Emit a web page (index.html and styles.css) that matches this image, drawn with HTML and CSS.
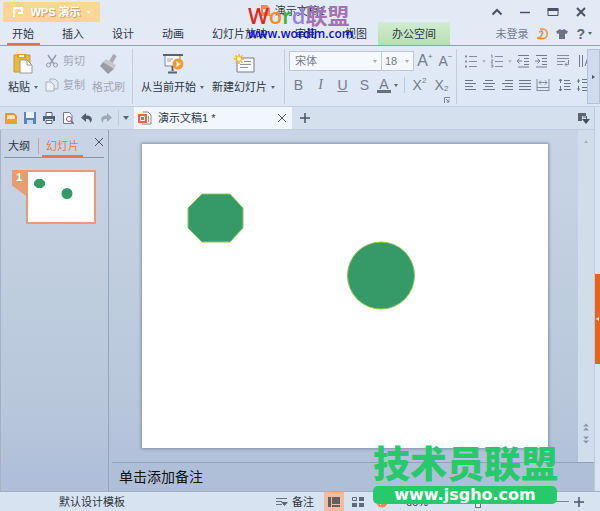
FILE: index.html
```html
<!DOCTYPE html>
<html lang="zh-CN">
<head>
    <meta charset="UTF-8">
    <meta name="viewport" content="width=device-width, initial-scale=1.0">
    <title>演示文稿1 - WPS 演示</title>
    <link rel="stylesheet" href="styles.css">
</head>
<body>
    <div class="app">
        <header class="title-bar">
            <button class="app-button">
                <svg width="12" height="12" viewBox="0 0 12 12"><path d="M2 11V2h8v5H6" fill="none" stroke="#fff" stroke-width="2"/></svg>
                <span>WPS 演示</span>
                <i class="arrow arrow-white"></i>
            </button>
            <div class="doc-title">
                <svg width="12" height="12" viewBox="0 0 12 12"><path d="M2 0h6l3 3v8H2z" fill="#f08a5c"/><path d="M4 4h4v3H4z" fill="#fff"/></svg>
                <span>演示文稿1 *</span>
            </div>
            <div class="window-buttons">
                <button aria-label="收起"><svg width="12" height="12" viewBox="0 0 12 12"><path d="M1.500 8.500L6 4l4.500 4.500" fill="none" stroke="#4a5364" stroke-width="2"/></svg></button>
                <button aria-label="最小化"><svg width="12" height="12" viewBox="0 0 12 12"><path d="M1 6.500h10" stroke="#4a5364" stroke-width="1.500"/></svg></button>
                <button aria-label="最大化"><svg width="12" height="12" viewBox="0 0 12 12"><path d="M1 3.500h10v6H1z" fill="none" stroke="#4a5364"/><path d="M.5 2h11v3H.5z" fill="#4a5364"/></svg></button>
                <button aria-label="关闭"><svg width="12" height="12" viewBox="0 0 12 12"><path d="M2 2l8 8M10 2l-8 8" stroke="#4a5364" stroke-width="2"/></svg></button>
            </div>
        </header>

        <nav class="menu">
            <button class="menu-tab active">开始</button>
            <button class="menu-tab">插入</button>
            <button class="menu-tab">设计</button>
            <button class="menu-tab">动画</button>
            <button class="menu-tab">幻灯片放映</button>
            <button class="menu-tab">审阅</button>
            <button class="menu-tab">视图</button>
            <button class="menu-tab office">办公空间</button>
            <div class="account">
                <a href="#">未登录</a>
                <button aria-label="云服务"><svg width="12" height="12" viewBox="0 0 12 12"><path d="M4 1h2.500a4.500 4.500 0 0 1 0 9.500H2M1 10c3 0 5-2 5-5M3 4l3-1 1 3" fill="none" stroke="#e8913a" stroke-width="1.500"/></svg></button>
                <button aria-label="皮肤"><svg width="12" height="12" viewBox="0 0 12 12"><path d="M4 1q2 2 4 0l4 2.500-1.500 2.500L9 5.500V11H3V5.500L1.500 6 0 3.500z" fill="#6b7484"/></svg></button>
                <button class="help" aria-label="帮助">?<i class="arrow"></i></button>
            </div>
        </nav>

        <div class="ribbon">
            <div class="group clipboard">
                <button class="big-tool">
                    <svg width="22" height="22" viewBox="0 0 22 22"><path d="M2 2h16v17H2z" fill="#e9b93c" stroke="#c99c29"/><path d="M5 1h9v4H5z" fill="#d5a12a"/><path d="M7 2h5v2H7z" fill="#fff"/><path d="M8 7h7l5 5v8H8z" fill="#fff" stroke="#9a9a94"/><path d="M15 7v5h5" fill="none" stroke="#9a9a94"/></svg>
                    <span>粘贴<i class="arrow"></i></span>
                </button>
                <div class="tool-stack">
                    <button class="tool" disabled>
                        <svg width="14" height="14" viewBox="0 0 14 14"><path d="M3 1l6 9M11 1L5 10" fill="none" stroke="#959cab" stroke-width="1.500"/><circle cx="3.500" cy="11" r="2" fill="none" stroke="#959cab"/><circle cx="10.500" cy="11" r="2" fill="none" stroke="#959cab"/></svg>
                        剪切
                    </button>
                    <button class="tool" disabled>
                        <svg width="14" height="14" viewBox="0 0 14 14"><path d="M5 3V1h5l3 3v7H9" fill="none" stroke="#a9afbd"/><path d="M1 4h5l3 3v6H1z" fill="#edf1f8" stroke="#a9afbd"/></svg>
                        复制
                    </button>
                </div>
                <button class="big-tool" disabled>
                    <svg width="22" height="22" viewBox="0 0 22 22"><path d="M13 9l4-7" stroke="#a5aab5" stroke-width="4"/><path d="M8 6l10 6-2 4L5 9z" fill="#c3c7d0"/><path d="M5 9l11 7-6 5-8-8z" fill="#989da7"/></svg>
                    <span>格式刷</span>
                </button>
            </div>

            <div class="group slides">
                <button class="big-tool">
                    <svg width="22" height="22" viewBox="0 0 22 22"><path d="M1 2h20" stroke="#596273" stroke-width="2"/><path d="M3 3v10h15V3" fill="#f3f6fa" stroke="#7d8797"/><path d="M5 6h6M5 8h4" stroke="#9aa4b2"/><path d="M10.500 13v5M6 19.500h9" stroke="#596273" stroke-width="2"/><circle cx="16" cy="11" r="5.500" fill="#f39a2d"/><path d="M14.500 8v6l4-3z" fill="#fff"/></svg>
                    <span>从当前开始<i class="arrow"></i></span>
                </button>
                <button class="big-tool">
                    <svg width="22" height="22" viewBox="0 0 22 22"><path d="M4 5h17v14H4z" fill="#f7f9fc" stroke="#737c8b"/><path d="M11 8.500h7M7 11.500h11M7 14.500h8" stroke="#8c94a2"/><path d="M6 1v10M1 6h10M2.500 2.500l7 7M9.500 2.500l-7 7" stroke="#f2b52e" stroke-width="1.500"/><circle cx="6" cy="6" r="2" fill="#fff3c2"/></svg>
                    <span>新建幻灯片<i class="arrow"></i></span>
                </button>
            </div>

            <div class="group font">
                <div class="row">
                    <div class="combo combo-font">
                        <select aria-label="字体"><option>宋体</option></select><i class="arrow"></i>
                    </div>
                    <div class="combo combo-size">
                        <select aria-label="字号"><option>18</option></select><i class="arrow"></i>
                    </div>
                    <button class="glyph large" aria-label="增大字号">A<sup>+</sup></button>
                    <button class="glyph" aria-label="减小字号">A<sup>−</sup></button>
                </div>
                <div class="row letters">
                    <button class="glyph bold">B</button>
                    <button class="glyph italic">I</button>
                    <button class="glyph underline">U</button>
                    <button class="glyph shadow">S</button>
                    <button class="glyph color">A</button>
                    <i class="arrow"></i>
                    <i class="sep"></i>
                    <button class="glyph">X<sup>2</sup></button>
                    <button class="glyph">X<sub>2</sub></button>
                </div>
                <button class="launcher" aria-label="字体设置"><svg width="6" height="6" viewBox="0 0 6 6"><path d="M.5 6V.5H6M2 2l3 3M5 2.500V5H2.500" fill="none" stroke="#7b8494"/></svg></button>
            </div>

            <div class="group paragraph">
                <div class="row">
                    <button aria-label="项目符号"><svg width="14" height="14" viewBox="0 0 14 14"><path d="M5 2.500h8M5 7.500h8M5 12.500h8" stroke="#858d9b"/><path d="M1 2.500h2M1 7.500h2M1 12.500h2" stroke="#858d9b" stroke-width="2"/></svg></button>
                    <i class="arrow pale"></i>
                    <button aria-label="编号"><svg width="14" height="14" viewBox="0 0 14 14"><path d="M5 2.500h8M5 7.500h8M5 12.500h8" stroke="#858d9b"/><path d="M1 1h1v3M1 6h2L1 9h2M1 11h2v2H1" fill="none" stroke="#858d9b"/></svg></button>
                    <i class="arrow pale"></i>
                    <button aria-label="减少缩进"><svg width="14" height="14" viewBox="0 0 14 14"><path d="M2 1.500h11M8 4.500h5M8 7.500h5M8 10.500h5M2 13h11M1 7h5M3.500 4.500L1 7l2.500 2.500" fill="none" stroke="#737c8c"/></svg></button>
                    <button aria-label="增加缩进"><svg width="14" height="14" viewBox="0 0 14 14"><path d="M2 1.500h11M8 4.500h5M8 7.500h5M8 10.500h5M2 13h11M1 7h5M3.500 4.500L6 7 3.500 9.500" fill="none" stroke="#737c8c"/></svg></button>
                    <i class="sep"></i>
                    <button aria-label="换行"><svg width="14" height="14" viewBox="0 0 14 14"><path d="M1 1.500h12M1 4.500h12M1 7.500h8M1 10.500h6M12.500 6v4.500H9M11 8.500l-2 2 2 2" fill="none" stroke="#858d9b"/></svg></button>
                    <i class="sep"></i>
                    <button aria-label="文字方向"><svg width="14" height="14" viewBox="0 0 14 14"><path d="M1.500 1v12M4.500 1v12M7 12l3-9 3 9M8 9h4" fill="none" stroke="#737c8c"/></svg></button>
                </div>
                <div class="row">
                    <button aria-label="左对齐"><svg width="14" height="14" viewBox="0 0 14 14"><path d="M1 2.500h8M1 5.500h11M1 8.500h8M1 11.500h11" stroke="#6c7585"/></svg></button>
                    <button aria-label="居中"><svg width="14" height="14" viewBox="0 0 14 14"><path d="M3 2.500h8M1 5.500h12M3 8.500h8M1 11.500h12" stroke="#6c7585"/></svg></button>
                    <button aria-label="右对齐"><svg width="14" height="14" viewBox="0 0 14 14"><path d="M5 2.500h8M2 5.500h11M5 8.500h8M2 11.500h11" stroke="#6c7585"/></svg></button>
                    <button aria-label="两端对齐"><svg width="14" height="14" viewBox="0 0 14 14"><path d="M1 2.500h12M1 5.500h12M1 8.500h12M1 11.500h12" stroke="#6c7585"/></svg></button>
                    <button aria-label="分散对齐"><svg width="14" height="14" viewBox="0 0 14 14"><path d="M1 1v12M13 1v12M3 4.500h8M5 2.500l-2 2 2 2M9 2.500l2 2-2 2M1 9.500h12M1 12.500h12" fill="none" stroke="#858d9b"/></svg></button>
                    <i class="sep"></i>
                    <button aria-label="行距"><svg width="14" height="14" viewBox="0 0 14 14"><path d="M6 2.500h6M6 5.500h7M6 8.500h6M6 11.500h7M2.500 1v4M1 3l1.500-2L4 3M2.500 8v5M1 11l1.500 2L4 11" fill="none" stroke="#6c7585"/></svg></button>
                    <button aria-label="段距"><svg width="14" height="14" viewBox="0 0 14 14"><path d="M6 1.500h7M6 4.500h7M6 9.500h7M6 12.500h7M2.500 1v4M1 3h3M2.500 8v5M1 11h3" fill="none" stroke="#6c7585"/></svg></button>
                </div>
            </div>
            <button class="ribbon-more" aria-label="更多"><i class="arrow-right"></i></button>
        </div>

        <div class="body">
            <div class="main">
                <div class="tab-bar">
                    <div class="quick">
                        <button aria-label="打开"><svg width="12" height="12" viewBox="0 0 12 12"><path d="M0 1h9l3 3v8H0z" fill="#e8932c"/><path d="M2 3h7l1 2v3H2z" fill="#fbe3ba"/><path d="M0 7h12v5H0z" fill="#f0a030"/></svg></button>
                        <button aria-label="保存"><svg width="12" height="12" viewBox="0 0 12 12"><path d="M0 0h12v12H0z" fill="#5d82b9"/><path d="M2 0h8v6H2z" fill="#e9f1fb"/><path d="M3 8h6v4H3z" fill="#c6d6ec"/></svg></button>
                        <button aria-label="打印"><svg width="12" height="12" viewBox="0 0 12 12"><path d="M3 4V.5h6V4M3 8.500h6v3H3z" fill="#fff" stroke="#52627c"/><path d="M0 4h12v5h-2V7H2v2H0z" fill="#52627c"/></svg></button>
                        <button aria-label="打印预览"><svg width="12" height="12" viewBox="0 0 12 12"><path d="M1.500.5h6l2.500 3v8h-8.500z" fill="#fff" stroke="#73798d"/><circle cx="7" cy="7" r="2.500" fill="#fff" stroke="#7c5c88"/><path d="M9 9l3 3" stroke="#7c5c88" stroke-width="1.500"/></svg></button>
                        <button aria-label="撤销"><svg width="12" height="12" viewBox="0 0 12 12"><path d="M5 1L0 5.500 5 10V7c3-.5 4 1 4 4 4-4 1-8-4-7.500z" fill="#525d70"/></svg></button>
                        <button aria-label="恢复"><svg width="12" height="12" viewBox="0 0 12 12"><path d="M7 1l5 4.500L7 10V7c-3-.5-4 1-4 4C-1 7 2 3 7 3.500z" fill="#a1a9b6"/></svg></button>
                        <i class="sep"></i>
                        <i class="arrow arrow-wide"></i>
                    </div>
                    <div class="doc-tab">
                        <svg width="14" height="14" viewBox="0 0 14 14"><path d="M5 1h5l3 3v9H4" fill="#fff" stroke="#9d7c6d"/><path d="M0 3h9v9H0z" fill="#dc6c3c"/><path d="M2.500 5.500h4v4h-4z" fill="none" stroke="#fff"/><path d="M10.500 5v6" stroke="#b98c78"/></svg>
                        <span>演示文稿1 *</span>
                        <button aria-label="关闭标签"><svg width="8" height="8" viewBox="0 0 8 8"><path d="M0 0l8 8M8 0L0 8" stroke="#4a5364"/></svg></button>
                    </div>
                    <button class="new-tab" aria-label="新建标签"><svg width="12" height="12" viewBox="0 0 12 12"><path d="M6 1v10M1 6h10" stroke="#4a5364" stroke-width="1.500"/></svg></button>
                    <button class="tab-list" aria-label="标签列表"><svg width="12" height="12" viewBox="0 0 12 12"><path d="M0 1h8v3H4v5H0z" fill="#5b6473"/><path d="M5 5h4M8.500 4v4" stroke="#5b6473"/><path d="M4 7h8l-4 5z" fill="#444d5d"/></svg></button>
                </div>

                <div class="work">
                    <aside class="outline">
                        <div class="outline-tabs">
                            <button class="outline-tab">大纲</button>
                            <i class="sep"></i>
                            <button class="outline-tab active">幻灯片</button>
                            <button class="close" aria-label="关闭面板"><svg width="8" height="8" viewBox="0 0 8 8"><path d="M0 0l8 8M8 0L0 8" stroke="#4a5364"/></svg></button>
                        </div>
                        <div class="thumb-row">
                            <span class="thumb-no">1</span>
                            <svg class="thumb" viewBox="0 0 66 50"><path d="M9 7h5l3 3v3l-3 3H9l-3-3v-3z" fill="#359a68"/><circle cx="39" cy="21.500" r="5.500" fill="#359a68"/></svg>
                        </div>
                    </aside>
                    <section class="editor">
                        <div class="stage">
                            <div class="slide">
                                <svg viewBox="0 0 406 304">
                                    <g fill="#359a68" stroke="#8cc858">
                                        <path d="M60 50h28l13 14v20l-13 14H60L46 84V64z"/>
                                        <circle cx="239" cy="131.500" r="33.500"/>
                                    </g>
                                </svg>
                            </div>
                            <div class="scrollbar">
                                <button aria-label="向上"><i class="arrow-up"></i></button>
                                <button class="page-prev" aria-label="上一页"><svg width="6" height="8" viewBox="0 0 6 8"><path d="M0 3.500L3 .5l3 3zM0 7.500l3-3 3 3z" fill="#8b95a6"/></svg></button>
                                <button class="page-next" aria-label="下一页"><svg width="6" height="8" viewBox="0 0 6 8"><path d="M0 .5h6l-3 3zM0 4.500h6l-3 3z" fill="#8b95a6"/></svg></button>
                            </div>
                        </div>
                        <div class="notes">单击添加备注</div>
                    </section>
                </div>
            </div>
            <aside class="side-strip">
                <button aria-label="展开任务窗格"><i class="arrow-left"></i></button>
            </aside>
        </div>

        <footer class="status">
            <span class="template">默认设计模板</span>
            <button class="notes-toggle">
                <svg width="13" height="12" viewBox="0 0 13 12"><path d="M1 2.500h11M1 5.500h6M1 8.500h6" stroke="#68727f"/><path d="M6 6h7l-3.500 4z" fill="#5b6473"/></svg>
                备注
            </button>
            <button class="view active" aria-label="普通视图"><svg width="12" height="12" viewBox="0 0 12 12"><path d="M0 1h3v10H0zM4 1h8v7H4zM4 9h8v2H4z" fill="#655e62"/></svg></button>
            <button class="view" aria-label="幻灯片浏览"><svg width="12" height="12" viewBox="0 0 12 12"><path d="M.5 1.500h4v3h-4z" fill="none" stroke="#5f6877"/><path d="M7 1h5v4H7zM0 7h5v4H0zM7 7h5v4H7z" fill="#5f6877"/></svg></button>
            <button class="view" aria-label="放映"><svg width="12" height="12" viewBox="0 0 12 12"><circle cx="6" cy="6" r="5.500" fill="#ef8a51"/><path d="M4 3l5 3-5 3z" fill="#fff"/></svg></button>
            <span class="zoom-value">66%</span>
            <input class="zoom" type="range" min="0" max="100" value="19" aria-label="显示比例">
            <button class="zoom-in" aria-label="放大"><svg width="10" height="10" viewBox="0 0 10 10"><path d="M5 0v10M0 5h10" stroke="#4a5364" stroke-width="1.500"/></svg></button>
        </footer>

        <div class="mark-top">
            <div class="mark-name"><span class="c-red">W</span><span class="c-orange">o</span><span class="c-green">r</span><span class="c-violet">d</span><span class="c-plum">联盟</span></div>
            <div class="mark-url">www.wordlm.com</div>
        </div>
        <div class="mark-bottom">
            <div class="mark-title">技术员联盟</div>
            <div class="mark-pill">www.jsgho.com</div>
        </div>
    </div>
</body>
</html>
```
FILE: styles.css
```css
* {
    box-sizing: border-box;
}
body {
    margin: 0;
    font-family: "Liberation Sans", "Noto Sans CJK SC", sans-serif;
    font-size: 11px;
    line-height: 16px;
    color: #2c3442;
}
button {
    display: flex;
    align-items: center;
    justify-content: center;
    padding: 0;
    border: 0;
    background: none;
    font: inherit;
    color: inherit;
    white-space: nowrap;
}
svg {
    display: block;
    flex-shrink: 0;
}
.app {
    position: relative;
    display: flex;
    flex-direction: column;
    height: 100vh;
    overflow: hidden;
    background: #e2eaf6;
}

/* 小三角 */
.arrow,
.arrow-up,
.arrow-left,
.arrow-right {
    display: inline-block;
    flex-shrink: 0;
    border: 2px solid transparent;
}
.arrow {
    border-top: 3px solid #5b6473;
    border-bottom: 0;
}
.arrow-wide {
    border-width: 4px 3px 0;
}
.arrow-up {
    border-bottom: 3px solid #a5afbf;
    border-top: 0;
}
.arrow-left {
    border-right: 3px solid #fff;
    border-left: 0;
}
.arrow-right {
    border-left: 3px solid #4a5364;
    border-right: 0;
}
.arrow-white {
    border-top-color: #fff;
}
.arrow.pale {
    border-top-color: #b4bcc9;
}
.sep {
    width: 1px;
    height: 16px;
    background: #c0c9d8;
}

/* 标题栏 */
.title-bar {
    display: flex;
    justify-content: space-between;
    height: 22px;
    padding: 0 13px 0 3px;
}
.app-button {
    gap: 6px;
    width: 97px;
    height: 20px;
    margin-top: 2px;
    background: #fcd695;
    color: #fff;
    font-weight: bold;
    text-shadow: 1px 1px 1px #b89a6c;
}
.doc-title {
    display: flex;
    align-items: center;
    gap: 4px;
}
.window-buttons {
    display: flex;
    gap: 16px;
    padding-top: 1px;
}

/* 菜单 */
.menu {
    display: flex;
    height: 24px;
    border-bottom: 1px solid #d98a62;
}
.menu-tab {
    position: relative;
    padding: 0 14px;
}
.menu-tab:first-child {
    padding-left: 12px;
}
.menu-tab.active::after {
    content: "";
    position: absolute;
    left: 7px;
    right: 8px;
    bottom: 0;
    height: 2px;
    background: #d9774a;
}
.menu-tab.office {
    margin-left: -3px;
    background: linear-gradient(#d3ecd2, #b5e0ae);
}
.account {
    display: flex;
    flex: 1;
    align-items: center;
    justify-content: flex-end;
    gap: 8px;
    padding-right: 8px;
}
.account a {
    color: #737c8c;
    text-decoration: none;
}
.help {
    gap: 3px;
    font-size: 14px;
    font-weight: bold;
    color: #5b6473;
}

/* 功能区 */
.ribbon {
    display: flex;
    flex-shrink: 0;
    height: 61px;
    padding: 3px 0 2px;
    border-bottom: 1px solid #c3cee0;
    background: linear-gradient(#e2eaf6, #dde7f5);
}
.group {
    flex-shrink: 0;
    border-right: 1px solid #c3ccdb;
}
.clipboard,
.slides {
    display: flex;
    align-items: flex-start;
}
.clipboard {
    gap: 7px;
    width: 133px;
    padding-left: 8px;
}
.slides {
    gap: 8px;
    width: 152px;
    padding-left: 8px;
}
.big-tool {
    flex-direction: column;
    gap: 4px;
    padding-top: 4px;
}
.big-tool span,
.tool {
    display: flex;
    align-items: center;
    gap: 4px;
}
.tool {
    height: 24px;
}
button:disabled {
    color: #a0a7b4;
}
.font {
    width: 172px;
    padding-left: 4px;
}
.row {
    display: flex;
    align-items: center;
    height: 24px;
}
.combo {
    display: flex;
    align-items: center;
    height: 20px;
    padding-right: 4px;
    border: 1px solid #bcc7d8;
    background: #f5f8fc;
}
.combo .arrow {
    border-top-color: #a5adba;
}
.combo-font {
    width: 93px;
}
.combo-size {
    width: 32px;
    border-left: 0;
}
.combo select {
    flex: 1;
    min-width: 0;
    padding: 0 0 0 5px;
    border: 0;
    appearance: none;
    background: none;
    font: inherit;
    color: #737c8c;
}
.combo-size select {
    padding-left: 3px;
}
.glyph {
    width: 19px;
    font-size: 14px;
    color: #737c8c;
}
.glyph.large {
    width: 22px;
    font-size: 16px;
}
.glyph sup,
.glyph sub {
    font-size: 8px;
    line-height: 8px;
}
.glyph sup {
    align-self: flex-start;
}
.glyph sub {
    align-self: flex-end;
}
.letters {
    gap: 3px;
}
.letters .sep {
    margin: 0 2px 0 3px;
}
.italic {
    font-family: "Liberation Serif", serif;
    font-style: italic;
}
.underline {
    text-decoration: underline;
}
.color {
    width: 14px;
    height: 15px;
    border-bottom: 3px solid #6b6f79;
}
.launcher {
    margin: 0 6px 0 auto;
}
.paragraph {
    flex: 1 1 0;
    min-width: 0;
    overflow: hidden;
    padding-left: 7px;
    border-right: 0;
}
.paragraph .row {
    gap: 4px;
}
.ribbon-more {
    width: 13px;
    border: 1px solid #b5c1d8;
    background: #d0dbed;
}

/* 主体 */
.body {
    display: flex;
    flex: 1;
    min-height: 0;
}
.main {
    display: flex;
    flex: 1;
    flex-direction: column;
    min-width: 0;
}
.tab-bar {
    display: flex;
    height: 23px;
    border-bottom: 1px solid #c0cde0;
    background: #d5e0ef;
}
.quick {
    display: flex;
    align-items: center;
    gap: 7px;
    width: 134px;
    padding-left: 5px;
}
.quick .sep {
    margin: 0 -3px 0 -1px;
}
.doc-tab {
    display: flex;
    align-items: center;
    gap: 6px;
    width: 158px;
    padding: 0 6px 0 4px;
    background: #f2f7fd;
}
.doc-tab button {
    margin-left: auto;
}
.new-tab {
    width: 26px;
}
.tab-list {
    margin: 0 4px 0 auto;
}
.work {
    display: flex;
    flex: 1;
    min-height: 0;
    background: linear-gradient(#c9d5e7, #b8c7da 75%, #afbed9);
}
.outline {
    width: 109px;
    border-left: 1px solid #a5b1c6;
    border-right: 1px solid #96a4bc;
}
.outline-tabs {
    display: flex;
    align-items: center;
    height: 28px;
    margin: 0 4px 0 3px;
    padding-top: 5px;
    border-bottom: 1px solid #8794ab;
}
.outline-tab {
    height: 22px;
    padding: 0 4px;
}
.outline-tabs .sep {
    margin: 0 3px 0 4px;
    background: #c5a69e;
}
.outline-tab.active {
    padding-top: 2px;
    border-bottom: 2px solid #e07a4d;
    color: #e07a4d;
}
.close {
    align-self: flex-start;
    margin: 3px 1px 0 auto;
}
.thumb-row {
    display: flex;
    align-items: flex-start;
    padding: 12px 12px 0 11px;
}
.thumb-no {
    width: 14px;
    height: 26px;
    background: #e89c72;
    clip-path: polygon(0 0, 100% 0, 100% 100%, 0 60%);
    color: #fff;
    font-weight: bold;
    line-height: 14px;
    text-align: center;
}
.thumb {
    flex: 1;
    min-width: 0;
    border: 2px solid #e89c72;
    background: #fff;
}
.editor {
    display: flex;
    flex: 1;
    flex-direction: column;
    min-width: 0;
}
.stage {
    display: flex;
    flex: 1;
    min-height: 0;
}
.slide {
    flex: 1;
    min-width: 0;
    margin: 14px 30px 14px 33px;
    background: #fff;
    box-shadow: 0 0 3px 1px #8190a8;
}
.slide svg {
    width: 100%;
}
.scrollbar {
    display: flex;
    flex-direction: column;
    gap: 5px;
    width: 16px;
    padding: 10px 0 18px;
    background: #d2ddec;
}
.page-prev {
    margin-top: auto;
}
.notes {
    height: 29px;
    margin-left: 3px;
    padding-left: 7px;
    border-top: 1px solid #93a2bd;
    background: #b0bfd8;
    color: #111;
    font-size: 14px;
    line-height: 28px;
}
.side-strip {
    display: flex;
    align-items: center;
    width: 6px;
    border-left: 1px solid #bcc9dd;
    background: #d8e3f1;
}
.side-strip button {
    width: 100%;
    height: 90px;
    margin-top: 40px;
    background: #e8641b;
}

/* 状态栏 */
.status {
    display: flex;
    align-items: center;
    height: 20px;
    padding: 0 16px 0 59px;
    border-top: 1px solid #a3b0c8;
    background: #d7e3f1;
}
.template {
    flex: 1;
}
.notes-toggle {
    gap: 4px;
    margin-right: 10px;
}
.view {
    width: 20px;
    height: 19px;
    margin-right: 4px;
}
.view.active {
    background: #efbda1;
}
.zoom-value {
    width: 48px;
    margin-left: 10px;
}
.zoom {
    width: 115px;
    height: 12px;
    margin: 0 5px 0 0;
    appearance: none;
    background: linear-gradient(#7b8494, #7b8494) center / 100% 1px no-repeat;
}
.zoom::-webkit-slider-thumb {
    width: 6px;
    height: 12px;
    border: 1px solid #6b7484;
    appearance: none;
    background: #eef3fa;
}

/* 浮在界面上的水印 */
.mark-top {
    position: absolute;
    top: 3px;
    left: 248px;
}
.mark-name {
    font-family: "Open Sans", "Noto Sans CJK SC", sans-serif;
    font-size: 22px;
    font-weight: 600;
    line-height: 24px;
    white-space: nowrap;
}
.mark-url {
    color: #0a0ad8;
    font-family: "Open Sans", sans-serif;
    font-size: 12px;
    font-weight: 600;
    line-height: 14px;
}
.c-red { color: #e02a20; }
.c-orange { color: #f0901c; }
.c-green { color: #35b828; }
.c-violet { color: #9a80dc; }
.c-plum { color: #a273b0; }
.mark-bottom {
    position: absolute;
    right: 43px;
    bottom: 7px;
    width: 184px;
}
.mark-title {
    color: #27c96b;
    font-size: 37px;
    font-weight: 900;
    line-height: 40px;
    white-space: nowrap;
}
.mark-pill {
    height: 18px;
    border-radius: 5px;
    background: #27c96b;
    color: #fff;
    font-family: "DejaVu Sans", sans-serif;
    font-size: 16px;
    font-weight: bold;
    line-height: 18px;
    text-align: center;
}
```
